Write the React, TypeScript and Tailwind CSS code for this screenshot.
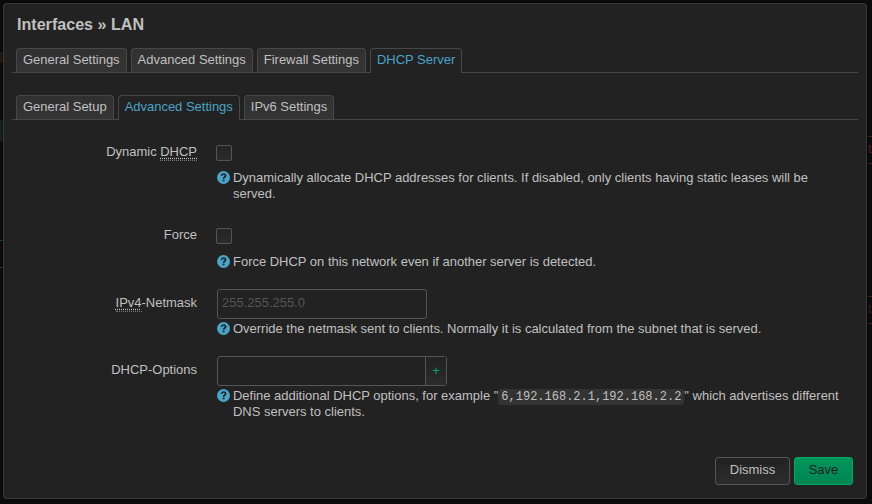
import React from 'react';

function Tab({ label, active }: { label: string; active?: boolean }) {
  return (
    <li
      className={
        'h-[24px] rounded-t-[4px] border border-b-0 border-[#484848] px-[6px] leading-[22px] whitespace-nowrap ' +
        (active ? '-mb-px h-[25px] bg-[#222] text-[#4ba3c7]' : 'bg-gradient-to-b from-[#303030] to-[#353535]')
      }
    >
      {label}
    </li>
  );
}

function Tabs({ items, active, className }: { items: string[]; active: number; className: string }) {
  return (
    <ul className={'mx-[8px] flex h-[25px] gap-[4px] border-b border-[#484848] pl-[4px] ' + className}>
      {items.map((t, i) => (
        <Tab key={t} label={t} active={i === active} />
      ))}
    </ul>
  );
}

function Row({ label, height, labelTop = 'mt-[4px]', children }: { label: React.ReactNode; height: string; labelTop?: string; children: React.ReactNode }) {
  return (
    <div className={'flex ' + height}>
      <label className={'mr-[20px] w-[193px] shrink-0 text-right leading-[18px] ' + labelTop}>{label}</label>
      <div className="flex w-[636px] flex-col items-start">{children}</div>
    </div>
  );
}

function Help({ children }: { children: React.ReactNode }) {
  return (
    <div className="flex">
      <svg className="mt-[2px] mr-[3px] h-[13px] w-[13px] shrink-0" viewBox="0 0 13 13">
        <circle cx="6.5" cy="6.5" r="6.5" fill="#4ba3c7" />
        <path d="M4.5 4.8C4.7 3.5 5.5 3 6.5 3C7.8 3 8.6 3.7 8.6 4.7C8.6 6 6.6 6.1 6.6 7.8" fill="none" stroke="#222" strokeWidth="1.7" />
        <rect x="5.7" y="8.6" width="1.8" height="1.7" fill="#222" />
      </svg>
      <p className="mt-px leading-[16px]">{children}</p>
    </div>
  );
}

function Check() {
  return <span className="-ml-px block h-[16px] w-[16px] rounded-[2px] border border-[#555] bg-gradient-to-b from-[#242424] to-[#2c2c2c]" />;
}

function Abbr({ children }: { children: React.ReactNode }) {
  return (
    <abbr className="border-b border-dotted border-[#777] pb-px underline decoration-dotted underline-offset-2">{children}</abbr>
  );
}

export default function App() {
  return (
    <div className="relative h-[504px] w-[872px] overflow-hidden bg-[#0b0b0b] p-[3px] font-['Liberation_Sans',Arial,sans-serif] text-[12.98px] text-[#c0c0c0]">
      <i className="absolute top-[120px] left-0 h-[21px] w-[3px] bg-[#152417]" />
      <i className="absolute top-[240px] left-0 h-[28px] w-[3px] border-y border-[#094a38]" />
      <i className="absolute top-[52px] left-0 h-[11px] w-[3px] bg-[#24180f]" />
      <i className="absolute top-[136px] left-[867px] h-[28px] w-[5px] border-y border-[#441d1d]" />
      <i className="absolute top-[296px] left-[867px] h-[28px] w-[5px] border-y border-[#441d1d]" />
      <span className="absolute top-[139px] left-[868px] text-[#551f1f]">t</span>
      <span className="absolute top-[299px] left-[868px] text-[#3c1818]">t</span>
      <div className="relative h-[496px] w-[864px] rounded-[3px] border border-[#383838] bg-[#222] shadow-[0_0_2px_#000]">
        <h4 className="mt-[10px] ml-[13px] h-[20px] text-[16.1px] leading-[20px] font-bold">Interfaces » LAN</h4>
        <Tabs className="mt-[14px]" active={3} items={['General Settings', 'Advanced Settings', 'Firewall Settings', 'DHCP Server']} />
        <Tabs className="mt-[22px]" active={1} items={['General Setup', 'Advanced Settings', 'IPv6 Settings']} />
        <div className="mt-[19px]">
          <Row height="h-[83px]" label={<>Dynamic <Abbr>DHCP</Abbr></>}>
            <div className="h-[30px] pt-[6px]"><Check /></div>
            <Help>Dynamically allocate DHCP addresses for clients. If disabled, only clients having static leases will be served.</Help>
          </Row>
          <Row height="h-[67px]" label="Force">
            <div className="h-[31px] pt-[6px]"><Check /></div>
            <Help>Force DHCP on this network even if another server is detected.</Help>
          </Row>
          <Row height="h-[67px]" labelTop="mt-[5px]" label={<><Abbr>IPv4</Abbr>-Netmask</>}>
            <input placeholder="255.255.255.0" className="mb-[1px] h-[30px] w-[210px] shrink-0 rounded-[3px] border border-[#555] px-[4px] pb-[3px] placeholder:text-[#555]" />
            <Help>Override the netmask sent to clients. Normally it is calculated from the subnet that is served.</Help>
          </Row>
          <Row height="h-[101px]" labelTop="mt-[5px]" label="DHCP-Options">
            <div className="mb-[1px] flex h-[30px] w-[230px] shrink-0 rounded-[3px] border border-[#555]">
              <input className="w-[208px] border-r border-[#555]" />
              <button className="flex-1 bg-gradient-to-b from-[#222] to-[#2c2c2c] leading-[26px] text-[#00a865]">+</button>
            </div>
            <Help>
              Define additional DHCP options, for example "
              <code className="rounded-[3px] bg-[#333] px-[3px] py-px font-['Liberation_Mono',monospace] text-[12px] leading-none">6,192.168.2.1,192.168.2.2</code>" which advertises different DNS servers to clients.
            </Help>
          </Row>
        </div>
        <div className="mr-[13px] flex h-[28px] justify-end gap-[4px]">
          <button className="w-[75px] rounded-[3px] border border-[#555] bg-gradient-to-b from-[#222] to-[#2c2c2c] pb-[2px]">Dismiss</button>
          <button className="w-[59px] rounded-[3px] border border-[#00a865] bg-gradient-to-b from-[#00965a] to-[#008550] pb-[2px] text-[#222]">Save</button>
        </div>
      </div>
    </div>
  );
}
